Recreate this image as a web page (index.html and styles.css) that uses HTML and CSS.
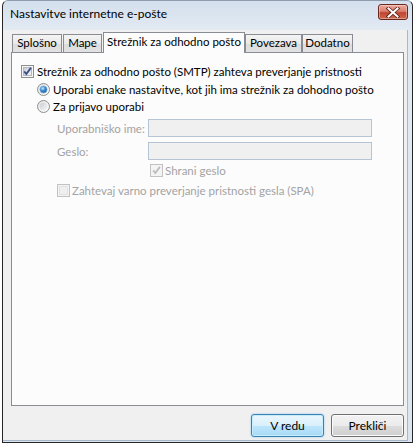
FILE: index.html
```html
<!DOCTYPE html>
<html lang="sl">
<head>
    <meta charset="UTF-8">
    <title>Nastavitve internetne e-pošte</title>
    <link rel="stylesheet" href="styles.css">
</head>
<body>
    <div class="window">
        <div class="titlebar">
            <span class="title">Nastavitve internetne e-pošte</span>
            <div class="close">
                <svg width="14" height="11" viewBox="0 0 14 11">
                    <path d="M2.5 1.5l9 8M11.5 1.5l-9 8" stroke="#5a1d14" stroke-width="3.6" stroke-linecap="square"/>
                    <path d="M2.5 1.5l9 8M11.5 1.5l-9 8" stroke="#fff" stroke-width="2" stroke-linecap="square"/>
                </svg>
            </div>
        </div>
        <div class="client">
            <div class="tabs">
                <div class="tab t1">Splošno</div>
                <div class="tab t2">Mape</div>
                <div class="tab t3 active">Strežnik za odhodno pošto</div>
                <div class="tab t4">Povezava</div>
                <div class="tab t5">Dodatno</div>
            </div>
            <div class="panel">
                <div class="row">
                    <svg class="ic" width="13" height="13" viewBox="0 0 13 13">
                        <rect x=".5" y=".5" width="12" height="12" fill="#f6f6f6" stroke="#8e8f8f"/>
                        <rect x="2.5" y="2.5" width="8" height="8" fill="url(#boxg)" stroke="#b4b8be"/>
                        <path d="M3.2 6.4l2.1 2.7 4.6-6.2" fill="none" stroke="#3b4d86" stroke-width="1.8"/>
                    </svg>
                    <span>Strežnik za odhodno pošto (SMTP) zahteva preverjanje pristnosti</span>
                </div>
                <div class="row sub r2">
                    <svg class="ic" width="13" height="13" viewBox="0 0 13 13">
                        <circle cx="6.5" cy="6.5" r="6" fill="url(#radg)" stroke="#8e8f8f"/>
                        <circle cx="6.5" cy="6.5" r="3.6" fill="url(#dotg)" stroke="#7fb2dc" stroke-width=".8"/>
                    </svg>
                    <span>Uporabi enake nastavitve, kot jih ima strežnik za dohodno pošto</span>
                </div>
                <div class="row sub">
                    <svg class="ic" width="13" height="13" viewBox="0 0 13 13">
                        <circle cx="6.5" cy="6.5" r="6" fill="url(#radg)" stroke="#8e8f8f"/>
                        <circle cx="6.5" cy="6.5" r="3.8" fill="url(#boxg)"/>
                    </svg>
                    <span>Za prijavo uporabi</span>
                </div>
                <div class="form">
                    <span class="off">Uporabniško ime:</span>
                    <div class="field"></div>
                    <span class="off">Geslo:</span>
                    <div class="field"></div>
                </div>
                <div class="row save off">
                    <svg class="ic" width="13" height="13" viewBox="0 0 13 13">
                        <rect x=".5" y=".5" width="12" height="12" fill="#f4f4f4" stroke="#c2c2c2"/>
                        <path d="M3.2 6.4l2.1 2.7 4.6-6.2" fill="none" stroke="#bdbdbd" stroke-width="1.8"/>
                    </svg>
                    <span>Shrani geslo</span>
                </div>
                <div class="row spa off">
                    <svg class="ic" width="13" height="13" viewBox="0 0 13 13">
                        <rect x=".5" y=".5" width="12" height="12" fill="#f4f4f4" stroke="#c2c2c2"/>
                        <rect x="2.5" y="2.5" width="8" height="8" fill="#efefef" stroke="#e2e2e2"/>
                    </svg>
                    <span>Zahtevaj varno preverjanje pristnosti gesla (SPA)</span>
                </div>
            </div>
            <div class="buttons">
                <button class="btn default">V redu</button>
                <button class="btn">Prekliči</button>
            </div>
        </div>
    </div>
    <svg class="defs" width="0" height="0">
        <defs>
            <linearGradient id="boxg" x1="0" y1="0" x2="1" y2="1">
                <stop offset="0" stop-color="#c9cdd3"/>
                <stop offset="1" stop-color="#f7f7f7"/>
            </linearGradient>
            <linearGradient id="radg" x1="0" y1="0" x2="1" y2="1">
                <stop offset="0" stop-color="#e2e2e2"/>
                <stop offset="1" stop-color="#fdfdfd"/>
            </linearGradient>
            <radialGradient id="dotg" cx=".4" cy=".35" r=".7">
                <stop offset="0" stop-color="#c9ecff"/>
                <stop offset=".45" stop-color="#3d8fd6"/>
                <stop offset="1" stop-color="#17508f"/>
            </radialGradient>
        </defs>
    </svg>
</body>
</html>
```

FILE: styles.css
```css
* {
    margin: 0;
    padding: 0;
    box-sizing: border-box;
}
body {
    width: 414px;
    height: 448px;
    overflow: hidden;
    background: #fff;
    font-family: Lato, 'Liberation Sans', sans-serif;
    font-size: 11.5px;
    color: #000;
    white-space: nowrap;
}
.window {
    margin-left: 2px;
    width: 411px;
    height: 443px;
    border: 1px solid #262626;
    border-top-color: #8f9cab;
    border-radius: 6px 6px 0 0;
    background: linear-gradient(#d4e0ed, #e2eaf3 29px, #dae5f1);
    display: flex;
    flex-direction: column;
}
.titlebar {
    height: 29px;
    flex: none;
    display: flex;
    align-items: flex-start;
    padding-left: 7px;
}
.title {
    margin-top: 5px;
    line-height: 15px;
    font-size: 12px;
}
.close {
    margin-left: auto;
    margin-right: 4px;
    margin-top: 3px;
    width: 30px;
    height: 16px;
    border: 1px solid #6a271d;
    border-radius: 3px;
    background: linear-gradient(#eba99c, #d9806f 45%, #c0442f 55%, #d0694f);
    box-shadow: inset 0 0 0 1px rgba(255, 255, 255, 0.35);
    display: flex;
    align-items: center;
    justify-content: center;
}
.client {
    flex: 1;
    margin: 0 4px 1px 0;
    background: #f0f0f0;
    border-right: 1px solid #a9b8c9;
    border-bottom: 1px solid #a9b8c9;
    padding: 0 3px 0 8px;
    display: flex;
    flex-direction: column;
}
.tabs {
    height: 22px;
    flex: none;
    display: flex;
    align-items: flex-end;
    padding-left: 1px;
    position: relative;
    z-index: 1;
}
.tab {
    height: 18px;
    border: 1px solid #898c95;
    border-bottom: none;
    background: linear-gradient(#f4f4f4, #e9e9e9 50%, #dcdcdc 50%, #e2e2e2);
    text-align: center;
    line-height: 16px;
}
.tab.active {
    height: 21px;
    margin-bottom: -1px;
    background: #fcfcfc;
    line-height: 18px;
}
.t1 { width: 50px; }
.t2 { width: 39px; margin-left: 1px; }
.t3 { width: 142px; margin-left: 1px; }
.t4 { width: 57px; }
.t5 { width: 51px; }
.panel {
    height: 354px;
    flex: none;
    border: 1px solid #898c95;
    background: #fcfcfc;
    padding: 10px 0 0 9px;
}
.row {
    display: flex;
    align-items: center;
    gap: 3px;
    height: 17px;
}
.ic {
    flex: none;
    display: block;
}
.sub {
    margin-left: 16px;
}
.r2 {
    margin-top: 1px;
}
.off {
    color: #a3a3a3;
}
.form {
    margin: 4px 0 0 36px;
    display: grid;
    grid-template-columns: 91px 224px;
    row-gap: 5px;
    align-items: center;
}
.field {
    height: 18px;
    border: 1px solid #b7c4d3;
    background: #f0f0f0;
}
.save {
    margin: 2px 0 0 129px;
    gap: 2px;
}
.spa {
    margin: 3px 0 0 36px;
    gap: 2px;
}
.buttons {
    display: flex;
    justify-content: flex-end;
    gap: 7px;
    margin-top: 8px;
}
.btn {
    width: 73px;
    height: 23px;
    border: 1px solid #707070;
    border-radius: 3px;
    background: linear-gradient(#f2f2f2, #ebebeb 50%, #dddddd 50%, #cfcfcf);
    box-shadow: inset 0 0 0 1px #fbfbfb;
    font: inherit;
    font-size: 12px;
    color: #000;
}
.btn.default {
    border-color: #3c7fb1;
    background: linear-gradient(#eaf6fd, #d9f0fc 50%, #bee6fd 50%, #a7d9f5);
    box-shadow: inset 0 0 0 1px #c7ecfb, 0 0 2px #7fc5ee;
}
.defs {
    display: block;
    width: 0;
    height: 0;
    overflow: hidden;
}
```
